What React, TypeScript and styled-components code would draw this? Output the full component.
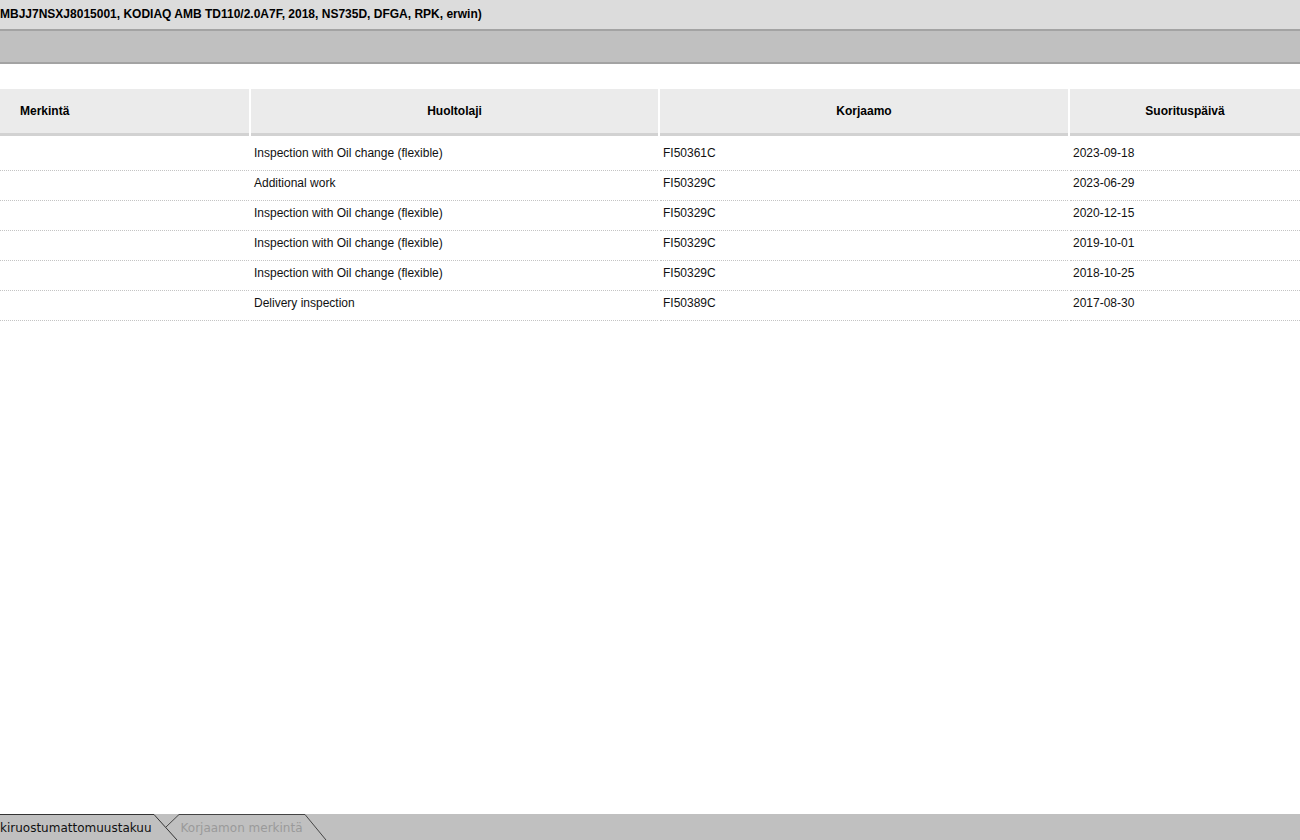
import { Fragment } from "react";
import styled, { createGlobalStyle } from "styled-components";

const GlobalStyle = createGlobalStyle`
  html, body {
    margin: 0;
    padding: 0;
    background: #ffffff;
    font-family: "Liberation Sans", Arial, sans-serif;
    color: #000;
  }
`;

const Page = styled.div`
  width: 1300px;
  height: 840px;
  display: flex;
  flex-direction: column;
  overflow: hidden;
`;

const TitleBar = styled.div`
  height: 29px;
  background: #dcdcdc;
  border-bottom: 2px solid #a3a3a3;
  display: flex;
  align-items: center;
  font-size: 12px;
  font-weight: 700;
  white-space: nowrap;
  padding-bottom: 2px;
  box-sizing: border-box;
  height: 31px;
`;

const ToolBand = styled.div`
  height: 31px;
  background: #c0c0c0;
  border-bottom: 2px solid #a3a3a3;
`;

const Content = styled.div`
  flex: 1;
  padding-top: 25px;
`;

const Grid = styled.div`
  display: grid;
  grid-template-columns: 249px 407px 408px 1fr;
  column-gap: 2px;
`;

const HeaderCell = styled.div<{ $align?: "left" | "center" }>`
  height: 44px;
  background: #ebebeb;
  border-bottom: 3px solid #d2d2d2;
  display: flex;
  align-items: center;
  justify-content: ${(p) => (p.$align === "left" ? "flex-start" : "center")};
  padding-left: ${(p) => (p.$align === "left" ? "20px" : "0")};
  font-size: 12px;
  font-weight: 700;
  margin-bottom: 5px;
`;

const Cell = styled.div`
  height: 30px;
  box-sizing: border-box;
  border-bottom: 1px dotted #c4c4c4;
  display: flex;
  align-items: center;
  padding: 0 3px 6px;
  font-size: 12px;
  color: #111;
`;

const TabBar = styled.div`
  height: 26px;
  background: #c0c0c0;
  display: flex;
  align-items: stretch;
  font-family: "DejaVu Sans", "Noto Sans", sans-serif;
  font-size: 12px;
`;

const Tab = styled.div<{ $active?: boolean }>`
  border-top: 1px solid ${(p) => (p.$active ? "#333" : "#444")};
  display: flex;
  align-items: center;
  padding: 0 2px 0 ${(p) => (p.$active ? "0" : "1px")};
  color: ${(p) => (p.$active ? "#111" : "#9a9a9a")};
  white-space: nowrap;
`;

const Slant = styled.svg`
  display: block;
  flex: none;
`;

const rows = [
  ["Inspection with Oil change (flexible)", "FI50361C", "2023-09-18"],
  ["Additional work", "FI50329C", "2023-06-29"],
  ["Inspection with Oil change (flexible)", "FI50329C", "2020-12-15"],
  ["Inspection with Oil change (flexible)", "FI50329C", "2019-10-01"],
  ["Inspection with Oil change (flexible)", "FI50329C", "2018-10-25"],
  ["Delivery inspection", "FI50389C", "2017-08-30"],
];

export default function App() {
  return (
    <Page>
      <GlobalStyle />
      <TitleBar>
        MBJJ7NSXJ8015001, KODIAQ AMB TD110/2.0A7F, 2018, NS735D, DFGA, RPK, erwin)
      </TitleBar>
      <ToolBand />
      <Content>
        <Grid>
          <HeaderCell $align="left">Merkintä</HeaderCell>
          <HeaderCell>Huoltolaji</HeaderCell>
          <HeaderCell>Korjaamo</HeaderCell>
          <HeaderCell>Suorituspäivä</HeaderCell>
          {rows.map((r, i) => (
            <Fragment key={i}>
              <Cell />
              <Cell>{r[0]}</Cell>
              <Cell>{r[1]}</Cell>
              <Cell>{r[2]}</Cell>
            </Fragment>
          ))}
        </Grid>
      </Content>
      <TabBar>
        <Tab $active>kiruostumattomuustakuu</Tab>
        <Slant width="26" height="26" viewBox="0 0 26 26">
          <line x1="0" y1="0.5" x2="23" y2="26" stroke="#333" strokeWidth="1" />
          <line x1="25" y1="0.5" x2="12" y2="13" stroke="#444" strokeWidth="1" />
          <line x1="25" y1="0.5" x2="26" y2="0.5" stroke="#444" strokeWidth="1" />
        </Slant>
        <Tab>Korjaamon merkintä</Tab>
        <Slant width="22" height="26" viewBox="0 0 22 26">
          <line x1="0" y1="0.5" x2="21" y2="26" stroke="#444" strokeWidth="1" />
        </Slant>
      </TabBar>
    </Page>
  );
}
